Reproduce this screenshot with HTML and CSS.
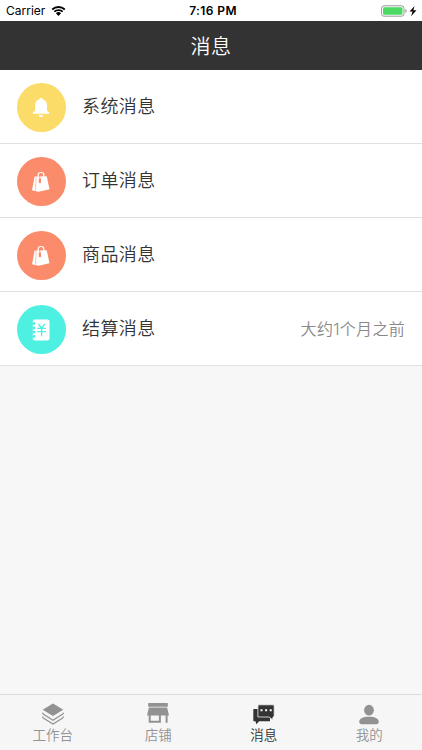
FILE: index.html
```html
<!DOCTYPE html>
<html lang="zh-CN">
<head>
  <meta charset="UTF-8">
  <title>消息</title>
  <meta name="viewport" content="width=device-width, initial-scale=1.0">
  <link rel="stylesheet" href="styles.css">
</head>
<body>
  <div class="status-bar">
    <div class="status-left">
      <span class="carrier">Carrier</span>
      <svg class="wifi" width="15" height="10" viewBox="0 0 14 10">
        <path d="M.7 3.5a9.2 9.2 0 0 1 12.6 0M2.8 5.7a6.2 6.2 0 0 1 8.4 0" fill="none" stroke="#000" stroke-width="1.8"/>
        <path d="M4.4 7.2a4 4 0 0 1 5.2 0L7 9.9z"/>
      </svg>
    </div>
    <div class="clock">7:16 PM</div>
    <div class="status-right">
      <svg width="37" height="12" viewBox="0 0 37 12">
        <rect x="1.5" y=".8" width="22.5" height="10.4" rx="2.5" fill="#fff" stroke="#999"/>
        <rect x="3" y="2.3" width="19.5" height="7.4" rx="1.2" fill="#4cd964"/>
        <path d="M25.3 4.2q1.4.3 1.4 1.8t-1.4 1.8z" fill="#999"/>
        <path d="M34.6 1l-5 5.6h3L31 11.3l5.5-6.1h-3.2z"/>
      </svg>
    </div>
  </div>
  <div class="header">消息</div>

  <div class="message-list">
    <div class="message">
      <div class="icon yellow">
        <svg width="20" height="22" viewBox="0 0 20 22">
          <path d="M10 1c.8 0 1.4.5 1.5 1.2C14.2 2.9 16 5.2 16 8v5.5l2.3 2.3v1H1.7v-1L4 13.5V8c0-2.8 1.8-5.1 4.5-5.8C8.600 1.500 9.200 1 10 1zM7.800 18h4.400c-.2 1.300-1 2.300-2.200 2.300S8 19.300 7.800 18z" fill="#fff"/>
        </svg>
      </div>
      <div class="title">系统消息</div>
    </div>
    <div class="message">
      <div class="icon orange">
        <svg width="20" height="22" viewBox="0 0 20 22">
          <path d="M3.6 5.6L15.7 5.2 18.500 18.200 7.500 20.700 1 19.200z" fill="#fff"/>
          <path d="M5.200 5.600L4.500 19.700" stroke="#fa8c6b" stroke-width=".5"/>
          <path d="M7.200 5.500V3.700c0-1.300 1-2.200 2.300-2.200h1c1.300 0 2.300.9 2.300 2.200v1.700" fill="none" stroke="#fff" stroke-width="1.200"/>
          <path d="M8.800 5v3" stroke="#fa8c6b" stroke-width=".7"/>
          <path d="M7.800 7.500h2.200v4.600H7.800z" fill="#fa8c6b"/>
        </svg>
      </div>
      <div class="title">订单消息</div>
    </div>
    <div class="message">
      <div class="icon orange">
        <svg width="20" height="22" viewBox="0 0 20 22">
          <path d="M3.6 5.6L15.7 5.2 18.500 18.200 7.500 20.700 1 19.200z" fill="#fff"/>
          <path d="M5.200 5.600L4.500 19.700" stroke="#fa8c6b" stroke-width=".5"/>
          <path d="M7.200 5.500V3.700c0-1.300 1-2.200 2.300-2.200h1c1.300 0 2.300.9 2.300 2.200v1.700" fill="none" stroke="#fff" stroke-width="1.200"/>
          <path d="M8.800 5v3" stroke="#fa8c6b" stroke-width=".7"/>
          <path d="M7.800 7.500h2.200v4.600H7.800z" fill="#fa8c6b"/>
        </svg>
      </div>
      <div class="title">商品消息</div>
    </div>
    <div class="message">
      <div class="icon cyan">
        <svg width="20" height="22" viewBox="0 0 20 22">
          <rect x="1.800" y=".6" width="16.700" height="20.800" rx="1.800" fill="#fff"/>
          <g fill="#4df0e1">
            <circle cx="3" cy="4.500" r="1.400"/>
            <circle cx="3" cy="8.800" r="1.400"/>
            <circle cx="3" cy="13.100" r="1.400"/>
            <circle cx="3" cy="17.400" r="1.400"/>
            <path d="M1 4h2v1H1zM1 8.300h2v1H1zM1 12.600h2v1H1zM1 16.900h2v1H1z"/>
          </g>
          <path d="M7.400 5l3.200 4.200L13.800 5M6.300 9.400h8.600M6.300 12.600h8.600M10.600 9.400v7.800" fill="none" stroke="#4df0e1" stroke-width="1.300"/>
        </svg>
      </div>
      <div class="title">结算消息</div>
      <div class="time">大约<span class="num">1</span>个月之前</div>
    </div>
  </div>

  <div class="tab-bar">
    <div class="tab">
      <svg width="24" height="24" viewBox="0 0 24 24">
        <path d="M12 1.400l10.300 6.300L12 14 1.700 7.700z" fill="#929292"/>
        <path d="M2.200 10.700c-.6.500-.5 1 0 1.400L12 18.200l9.800-6.100c.5-.4.6-.9 0-1.400M2.200 14.500c-.6.500-.5 1 0 1.400L12 22.100l9.800-6.200c.5-.4.6-.9 0-1.400" fill="none" stroke="#929292" stroke-width="1.200"/>
      </svg>
      <span>工作台</span>
    </div>
    <div class="tab">
      <svg width="24" height="24" viewBox="0 0 24 24">
        <path d="M2.200 1h19.600v3.700H2.200zM2.900 5.500h18.200L23 13.500H1zM2.700 13h2v5.700h8.200V13h2v7.700H2.700zM19.600 13h2v7.700h-2z" fill="#929292"/>
      </svg>
      <span>店铺</span>
    </div>
    <div class="tab active">
      <svg width="24" height="24" viewBox="0 0 24 24">
        <path d="M2.300 7h15.700v12.300H7.200L4.300 22.300l-.8-3H2.300c-.7 0-1-.4-1-1V8c0-.6.300-1 1-1z" fill="#333"/>
        <path d="M7 2.800h14c.8 0 1.200.5 1.200 1.200v9.800c0 .7-.4 1.200-1.200 1.200l-.4 2.800-3.600-2.800H5.900V4C5.900 3.300 6.300 2.800 7 2.800z" fill="#333" stroke="#f6f6f6" stroke-width=".8"/>
        <path d="M8.500 7.200h2v2h-2zM13.100 7.200h2v2h-2zM17.700 7.200h2v2h-2z" fill="#fff"/>
      </svg>
      <span>消息</span>
    </div>
    <div class="tab">
      <svg width="24" height="24" viewBox="0 0 24 24">
        <ellipse cx="12" cy="8.200" rx="4.900" ry="5.400" fill="#929292"/>
        <path d="M2.200 19.600c0-2.800 3.500-4.900 9.800-4.900s9.800 2.100 9.800 4.900c0 1.600-1 2.600-2.400 2.600H4.600c-1.400 0-2.400-1-2.400-2.600z" fill="#929292"/>
      </svg>
      <span>我的</span>
    </div>
  </div>
</body>
</html>
```

FILE: styles.css
```css
* {
  box-sizing: border-box;
}
body {
  margin: 0;
  height: 100vh;
  display: flex;
  flex-direction: column;
  font-family: "Noto Sans CJK SC", sans-serif;
  font-weight: 350;
  background: #f7f7f7;
  overflow: hidden;
}
.status-bar {
  height: 21px;
  padding: 0 5px 0 6px;
  display: flex;
  align-items: center;
  background: #fff;
  color: #000;
  font-family: Inter, sans-serif;
  font-size: 12px;
  font-weight: 400;
}
.status-left, .status-right {
  flex: 1;
  display: flex;
  align-items: center;
}
.status-left {
  gap: 6px;
}
.status-right {
  justify-content: flex-end;
}
.clock {
  padding-left: 3px;
  font-weight: 600;
  letter-spacing: 0.4px;
}
.header {
  height: 49px;
  line-height: 50px;
  text-align: center;
  background: #333;
  color: #fff;
  font-size: 20px;
  letter-spacing: 0.4px;
}
.message-list {
  background: #fff;
}
.message {
  height: 74px;
  padding: 0 17px;
  display: flex;
  align-items: center;
  border-bottom: 1px solid #e0e0e0;
}
.icon {
  width: 49px;
  height: 49px;
  margin-top: 2px;
  padding-right: 2px;
  border-radius: 50%;
  display: flex;
  align-items: center;
  justify-content: center;
}
.yellow {
  background: #fbdc68;
}
.orange {
  background: #fa8c6b;
}
.cyan {
  background: #4df0e1;
}
.title {
  flex: 1;
  margin-left: 16px;
  padding-bottom: 3px;
  color: #333;
  font-size: 18px;
  letter-spacing: 0.4px;
}
.time {
  padding-bottom: 2px;
  color: #888;
  font-size: 16px;
  letter-spacing: 0.3px;
}
.num {
  font-family: Inter, sans-serif;
  font-weight: 300;
}
.tab-bar {
  height: 56px;
  margin-top: auto;
  padding-top: 7px;
  display: flex;
  border-top: 1px solid #dcdcdc;
  background: #f6f6f6;
}
.tab {
  flex: 1;
  display: flex;
  flex-direction: column;
  align-items: center;
  color: #929292;
  font-size: 13.5px;
  line-height: 17px;
}
.tab.active {
  color: #333;
}
```
